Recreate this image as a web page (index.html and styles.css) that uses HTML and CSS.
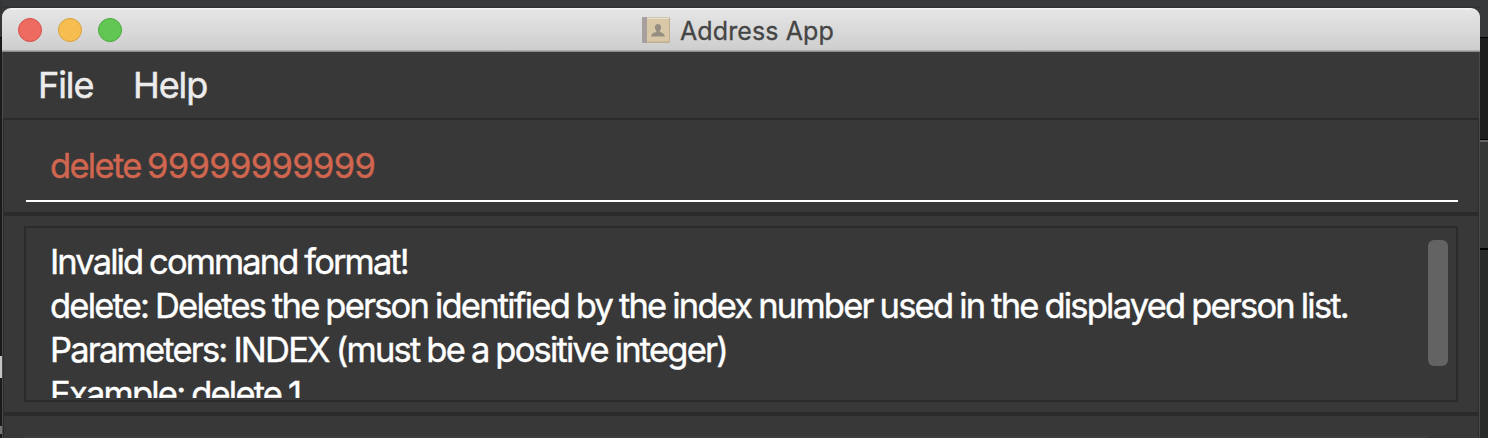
FILE: index.html
```html
<!DOCTYPE html>
<html lang="en">
<head>
<meta charset="utf-8">
<title>Address App</title>
<link rel="stylesheet" href="styles.css">
</head>
<body>
<div class="desktop">
  <div class="backdrop-left"></div>
  <main class="window">
    <header class="titlebar">
      <div class="lights">
        <span class="light close"></span>
        <span class="light minimize"></span>
        <span class="light zoom"></span>
      </div>
      <svg class="book" width="28" height="26" viewBox="0 0 28 26">
        <rect x="0" y="0" width="28" height="26" rx="1.5" fill="#bfae90"/>
        <rect x="0" y="0" width="5" height="26" rx="1" fill="#a8a09e"/>
        <rect x="5" y="1.5" width="22" height="23" fill="#d8c8a8"/>
        <rect x="5" y="0.5" width="22" height="1.5" fill="#e6e0d3"/>
        <path d="M16 7c-2 0-3.100 1.500-3.100 3.400 0 1.300.5 2.500 1.300 3.200v1.300c-1.500.7-5 1.200-5 4.600h13.600c0-3.400-3.500-3.900-5-4.600v-1.300c.8-.7 1.300-1.900 1.300-3.200C19.100 8.500 18 7 16 7z" fill="#968e80"/>
      </svg>
      <span class="title">Address App</span>
    </header>
    <nav class="menubar">
      <span class="menu">File</span>
      <span class="menu">Help</span>
    </nav>
    <section class="panes">
      <div class="command"><div class="field"><span class="verb">delete</span> <span class="index">99999999999</span></div></div>
      <div class="result">
        <div class="display">
          <div class="message">
            <div class="headline">Invalid command format!</div>
            <div>delete: Deletes the person identified by the index number used in the displayed person list.</div>
            <div>Parameters: INDEX (must be a positive integer)</div>
            <div>Example: delete 1</div>
          </div>
          <div class="thumb"></div>
        </div>
      </div>
      <div class="list"><div class="list-edge"></div></div>
    </section>
  </main>
  <div class="backdrop-right"></div>
</div>
</body>
</html>
```
FILE: styles.css
```css
* { box-sizing: border-box; }
body {
  margin: 0;
  width: 1488px;
  height: 438px;
  overflow: hidden;
  background: #39393b;
  font-family: Inter, "Liberation Sans", sans-serif;
}
.desktop {
  display: grid;
  grid-template-columns: 2px 1478px 8px;
  height: 438px;
  background: linear-gradient(#38393b 0 6px, #2d2d2f 8px, #38393b 8px);
}
.backdrop-left {
  background: linear-gradient(#343537 0 37px, #000 37px 38px, #1b1b1b 38px 356px, #c4c4c4 356px 378px, #1b1b1b 378px 426px, #777 426px 434px, #1b1b1b 434px);
}
.backdrop-right {
  background: linear-gradient(#38393b 0 37px, #000 37px 38px, #1d1d1d 38px 139px, #000 139px 140px, #636464 140px 142px, #353737 142px 248px, #000 248px 250px, #282929 250px);
}
.window {
  margin-top: 8px;
  height: 430px;
  display: flex;
  flex-direction: column;
  overflow: hidden;
  border-radius: 9px 9px 0 0;
  background: #383838;
}
.titlebar {
  flex: none;
  height: 44px;
  display: flex;
  align-items: center;
  padding-left: 16px;
  background: linear-gradient(#f4f4f4 0 1px, #e5e5e5 2px, #cecece 42px, #ababab 42px 43px, #8f8f8f 43px);
}
.lights { display: flex; gap: 16px; width: 624px; }
.light { width: 24px; height: 24px; border-radius: 50%; border: 1px solid; }
.close { background: #ed6b60; border-color: #d6514a; }
.minimize { background: #f6be50; border-color: #dba03b; }
.zoom { background: #62c655; border-color: #4bab3b; }
.book { margin-right: 10px; }
.title { font-size: 25px; color: #454545; -webkit-text-stroke: 0.3px #454545; line-height: 44px; white-space: nowrap; letter-spacing: 0.1px; padding-top: 2px; }
.menubar {
  flex: none;
  height: 68px;
  display: flex;
  padding-left: 35px;
  border: solid #4a4a4a;
  border-width: 0 1px;
  box-shadow: inset 0 -2px #2b2b2b;
}
.menu { font-size: 36px; line-height: 66px; color: #ececec; width: 95px; letter-spacing: -1.1px; -webkit-text-stroke: 0.5px #ececec; }
.panes {
  flex: 1;
  padding: 0 1px;
  border: solid #4a4a4a;
  border-width: 0 1px;
  box-shadow: inset 1px 0 #2b2b2b, inset -1px 0 #2b2b2b;
}
.command { height: 96px; padding: 0 20px 0 22px; border-bottom: 4px solid #2b2b2b; }
.field {
  height: 82px;
  padding-left: 24px;
  border-bottom: 2px solid #fff;
  color: #d16650;
  font-size: 34.5px;
  line-height: 92px;
  letter-spacing: -1.7px;
  word-spacing: -1.5px;
  white-space: nowrap;
  -webkit-text-stroke: 0.4px #d16650;
}
.index { letter-spacing: -0.65px; }
.result { height: 200px; padding: 10px 20px 10px; border-bottom: 4px solid #2b2b2b; }
.display {
  height: 176px;
  display: flex;
  justify-content: space-between;
  border: 2px solid #2b2b2b;
  padding: 12px 8px 2px 24px;
}
.message {
  height: 158px;
  overflow: hidden;
  color: #fff;
  font-size: 34.5px;
  line-height: 44px;
  white-space: nowrap;
  letter-spacing: -1.8px;
  word-spacing: -1px;
  -webkit-text-stroke: 0.4px #fff;
}
.headline { letter-spacing: -1.9px; }
.thumb { width: 20px; height: 126px; border-radius: 6px; background: #636363; }
.list { padding: 20px 50px 0 20px; }
.list-edge { height: 2px; background: #3e3e3e; }
```
